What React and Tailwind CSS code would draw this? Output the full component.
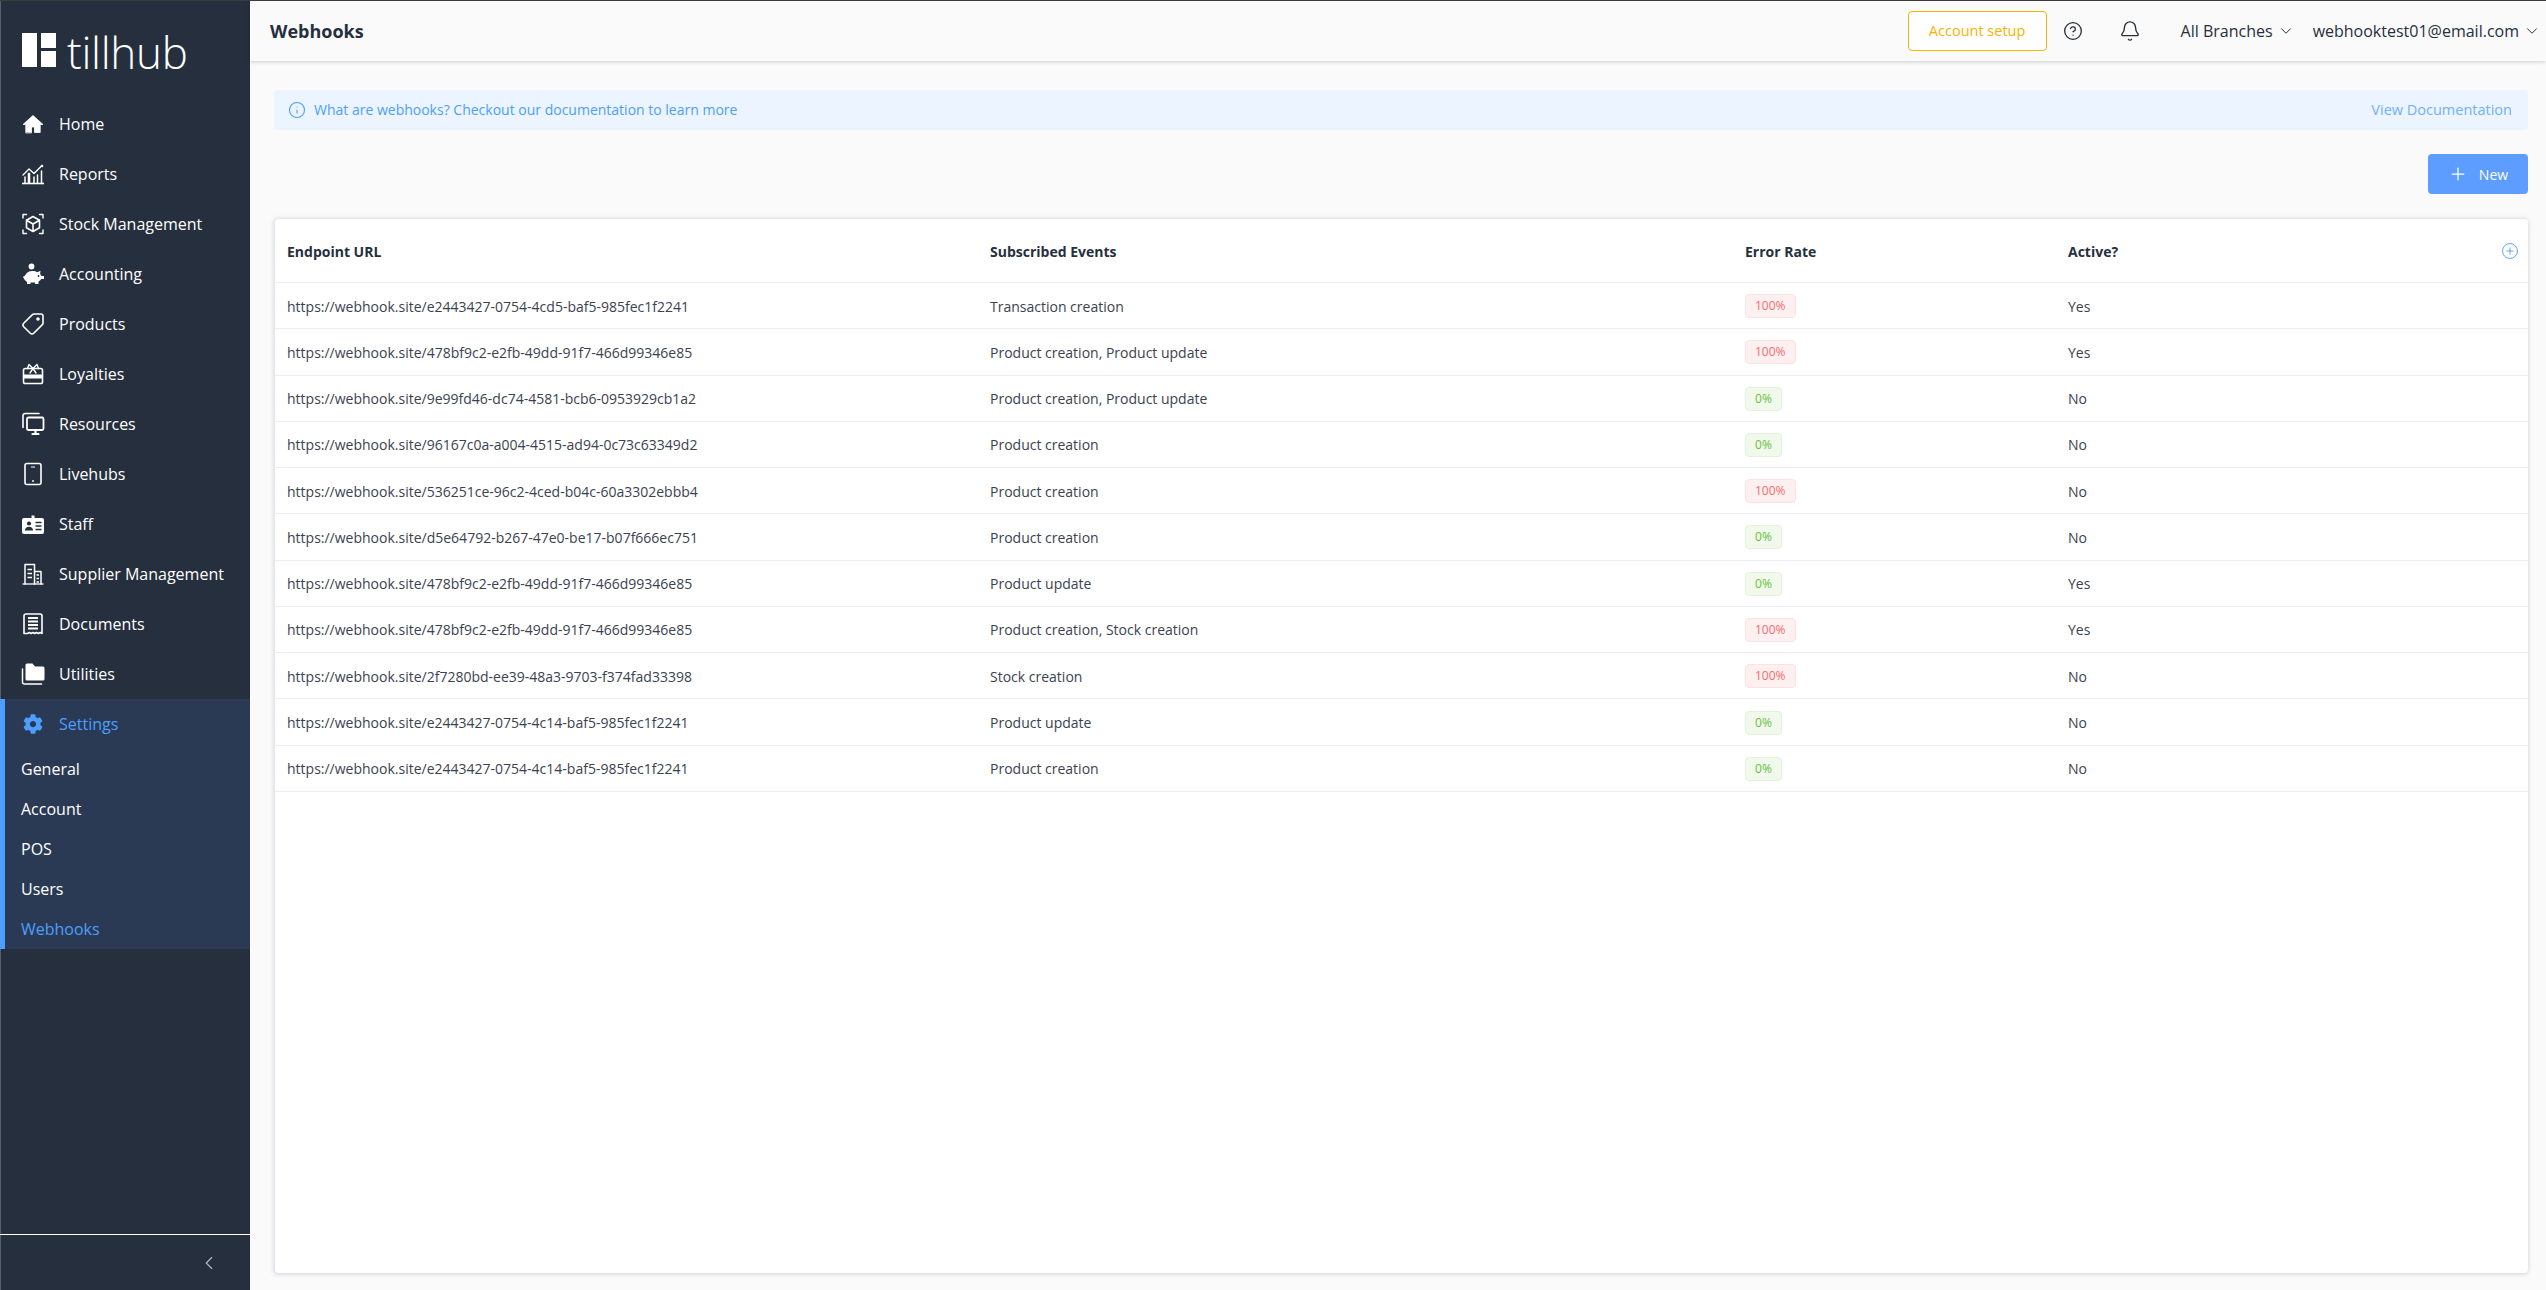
import React from 'react';
import { Bell, ChevronDown, ChevronLeft, CircleHelp, CirclePlus, Info, Plus } from 'lucide-react';
import { FaCog } from 'react-icons/fa';

const SB = '#262f3e';

const Svg = ({ children }) => (
  <svg viewBox="0 0 24 24" className="w-[24px] h-[24px]" fill="none" stroke="white" strokeWidth="1.6" strokeLinecap="round" strokeLinejoin="round">
    {children}
  </svg>
);

const HomeIcon = () => (
  <Svg><path d="M10.5 20.5v-5.5h3v5.500h5.700v-8H22L12 3.500 2 12.500h2.800v8z" fill="white" stroke="white" strokeWidth="0.8" /></Svg>
);
const ReportsIcon = () => (
  <Svg>
    <path d="M1 21.500h22" strokeLinecap="butt" />
    <path d="M2 13l6-6 5 4.500 7-7" strokeWidth="1.400" />
    <circle cx="21" cy="4" r="1.300" fill="white" stroke="none" />
    <path d="M4 21v-6M8.500 21v-9.500h-1V21M13 21v-6M16.500 21v-8M20.500 21V9" strokeWidth="1.500" />
  </Svg>
);
const StockIcon = () => (
  <Svg>
    <path d="M2 6V2.500h3.500M18.500 2.500H22V6M22 18v3.500h-3.500M5.500 21.500H2V18" strokeWidth="1.400" />
    <path d="M12 4.500l6.500 3.700v7.600L12 19.500l-6.500-3.700V8.200zM5.500 8.200L12 12l6.500-3.800M12 12v7.500" strokeWidth="1.600" />
  </Svg>
);
const PiggyIcon = () => (
  <Svg>
    <circle cx="10.500" cy="4.500" r="2.900" fill="white" stroke="none" />
    <path d="M2 14.500c1 0 1.600-.3 2.200-1.200C5.500 10.500 8 9 11.500 9c2 0 3.500.4 4.800 1.200l3.200-1.500-.4 3.200c.6.7 1 1.300 1.300 2.100H23v3h-2.800c-.6 1.100-1.500 2-2.700 2.600V22h-3.400v-1.500H9.500V22H6v-2.100C4.400 19 3.300 17.800 2.800 16.300 2.300 16 2 15.300 2 14.500z" fill="white" stroke="none" />
    <circle cx="17.500" cy="14" r=".9" fill={SB} stroke="none" />
  </Svg>
);
const TagIcon = () => (
  <Svg>
    <g transform="translate(24 0) scale(-1 1)">
      <path d="M12.600 2.600A2 2 0 0 0 11.200 2H4a2 2 0 0 0-2 2v7.200a2 2 0 0 0 .6 1.400l8.700 8.700a2.400 2.400 0 0 0 3.400 0l6.600-6.600a2.400 2.400 0 0 0 0-3.400z" />
      <circle cx="7" cy="7" r="1" fill="white" />
    </g>
  </Svg>
);
const GiftIcon = () => (
  <Svg>
    <rect x="2.500" y="6.500" width="19" height="15" rx="1.800" />
    <path d="M3 12.500h18v4H3z" fill="white" stroke="none" />
    <path d="M12 6.500L8 2.500 6.500 6.500M12 6.500l4-4 1.500 4M12 6.500L9 11M12 6.500l3 4.500" strokeWidth="1.400" />
  </Svg>
);
const ResourcesIcon = () => (
  <Svg>
    <path d="M2 15.500V3.500a2 2 0 0 1 2-2h14" />
    <rect x="6" y="5.500" width="16.500" height="12.500" rx="1.500" strokeWidth="1.800" />
    <path d="M11.500 22h6M14.500 18v4" strokeWidth="2.200" />
  </Svg>
);
const LivehubIcon = () => (
  <Svg>
    <rect x="4" y="1.500" width="16" height="21" rx="2" />
    <path d="M10.500 5h3" strokeWidth="1.200" />
    <circle cx="12" cy="19" r=".9" fill="white" stroke="none" />
  </Svg>
);
const StaffIcon = () => (
  <Svg>
    <path d="M3 6h7.500V3.500h3V6H21a2 2 0 0 1 2 2v12a2 2 0 0 1-2 2H3a2 2 0 0 1-2-2V8a2 2 0 0 1 2-2z" fill="white" stroke="none" />
    <circle cx="8" cy="11.500" r="2.100" fill={SB} stroke="none" />
    <path d="M3.800 18.500c.3-2.500 1.800-3.800 4.200-3.800s3.900 1.300 4.200 3.800z" fill={SB} stroke="none" />
    <path d="M14.500 10.500h6M14.500 14h6M14.500 17.500h6" stroke={SB} strokeWidth="1.600" strokeLinecap="butt" />
  </Svg>
);
const SupplierIcon = () => (
  <Svg>
    <path d="M1.500 22h21" strokeLinecap="butt" strokeWidth="1.300" />
    <path d="M4 22V2.500h9.500V22M13.500 9.500H20V22" strokeWidth="1.500" />
    <path d="M6.500 7.500h4.500M6.500 11.500h4.500M6.500 15.500h4.500M15.500 13h2.500M15.500 16.500h2.500M15.500 20h2.500" strokeWidth="1.700" strokeLinecap="butt" />
  </Svg>
);
const DocumentIcon = () => (
  <Svg>
    <path d="M3 21.500V4a2 2 0 0 1 2-2h14a2 2 0 0 1 2 2v17.500l-1.800-1-1.800 1-1.800-1-1.800 1-1.800-1-1.800 1-1.800-1-1.800 1z" strokeWidth="1.600" />
    <path d="M7 6h10M7 9.500h10M7 13h10M7 16.500h10" strokeWidth="2" strokeLinecap="butt" />
  </Svg>
);
const FolderIcon = () => (
  <Svg>
    <path d="M1.500 7v13a2 2 0 0 0 2 2h17" strokeWidth="1.500" />
    <path d="M6 1.500h5.500l2.500 3h8a1.500 1.500 0 0 1 1.500 1.500v11a1.500 1.500 0 0 1-1.500 1.500H6A1.500 1.500 0 0 1 4.500 17V3A1.500 1.500 0 0 1 6 1.500z" fill="white" stroke="none" />
  </Svg>
);

const NAV = [
  ['Home', HomeIcon],
  ['Reports', ReportsIcon],
  ['Stock Management', StockIcon],
  ['Accounting', PiggyIcon],
  ['Products', TagIcon],
  ['Loyalties', GiftIcon],
  ['Resources', ResourcesIcon],
  ['Livehubs', LivehubIcon],
  ['Staff', StaffIcon],
  ['Supplier Management', SupplierIcon],
  ['Documents', DocumentIcon],
  ['Utilities', FolderIcon],
];

const SUB = ['General', 'Account', 'POS', 'Users', 'Webhooks'];

const ROWS = [
  ['e2443427-0754-4cd5-baf5-985fec1f2241', 'Transaction creation', 100, 'Yes'],
  ['478bf9c2-e2fb-49dd-91f7-466d99346e85', 'Product creation, Product update', 100, 'Yes'],
  ['9e99fd46-dc74-4581-bcb6-0953929cb1a2', 'Product creation, Product update', 0, 'No'],
  ['96167c0a-a004-4515-ad94-0c73c63349d2', 'Product creation', 0, 'No'],
  ['536251ce-96c2-4ced-b04c-60a3302ebbb4', 'Product creation', 100, 'No'],
  ['d5e64792-b267-47e0-be17-b07f666ec751', 'Product creation', 0, 'No'],
  ['478bf9c2-e2fb-49dd-91f7-466d99346e85', 'Product update', 0, 'Yes'],
  ['478bf9c2-e2fb-49dd-91f7-466d99346e85', 'Product creation, Stock creation', 100, 'Yes'],
  ['2f7280bd-ee39-48a3-9703-f374fad33398', 'Stock creation', 100, 'No'],
  ['e2443427-0754-4c14-baf5-985fec1f2241', 'Product update', 0, 'No'],
  ['e2443427-0754-4c14-baf5-985fec1f2241', 'Product creation', 0, 'No'],
];

const Sidebar = () => (
  <aside className="w-[250px] shrink-0 bg-[#262f3e] border-l border-[#5a5f68] flex flex-col text-white">
    <div className="h-[98px] pl-[21px] pt-[32px] flex items-start">
      <div className="flex gap-[4px] w-[34px] h-[34px]">
        <div className="w-[15px] h-full bg-white" />
        <div className="w-[15px] flex flex-col gap-[3px]">
          <div className="h-[15px] bg-white" />
          <div className="h-[16px] bg-white" />
        </div>
      </div>
      <span className="ml-[11px] -mt-[9px] text-[44px] leading-[56px] font-light tracking-[-0.3px]">tillhub</span>
    </div>
    {NAV.map(([label, Icon]) => (
      <div key={label} className="h-[50px] flex items-center pl-[20px] text-[16px]">
        <span className="w-[24px] h-[24px] flex items-center justify-center"><Icon /></span>
        <span className="ml-[14px]">{label}</span>
      </div>
    ))}
    <div className="bg-[#2a3a55] -ml-px border-l-[5px] border-[#4d9eff]">
      <div className="h-[50px] flex items-center pl-[16px] text-[16px] text-[#4d9eff]">
        <span className="w-[24px] h-[24px] flex items-center justify-center"><FaCog size={20} /></span>
        <span className="ml-[14px]">Settings</span>
      </div>
      {SUB.map((s) => (
        <div key={s} className={`h-[40px] flex items-center pl-[16px] text-[16px] ${s === 'Webhooks' ? 'text-[#4d9eff]' : 'text-white'}`}>
          {s}
        </div>
      ))}
    </div>
    <div className="mt-auto h-[56px] border-t border-white flex items-center justify-end pr-[30px] -ml-px">
      <ChevronLeft size={22} strokeWidth={1.2} color="#b4b8be" />
    </div>
  </aside>
);

const Header = () => (
  <header className="h-[60px] shrink-0 bg-[#fafafa] shadow-[0_1px_4px_rgba(0,0,0,0.18)] flex items-center pl-[20px] text-[#262f3e] relative">
    <h1 className="text-[18px] font-bold">Webhooks</h1>
    <div className="ml-auto flex items-center">
      <button className="w-[139px] h-[40px] bg-white border border-[#f5b400] rounded-[4px] text-[14.5px] font-medium text-[#f5b400]">
        Account setup
      </button>
      <CircleHelp size={20} strokeWidth={1.6} className="ml-[16px]" />
      <Bell size={22} strokeWidth={1.5} className="ml-[36px]" />
      <span className="ml-[40px] text-[16px]">All Branches</span>
      <ChevronDown size={18} strokeWidth={1.3} className="ml-[4px]" />
      <span className="ml-[18px] text-[16px]">webhooktest01@email.com</span>
      <ChevronDown size={18} strokeWidth={1.3} className="ml-[4px] mr-[5px]" />
    </div>
  </header>
);

const Badge = ({ value }) => (
  <span
    className={`inline-flex items-center h-[24px] px-[9px] border rounded-[4px] text-[12px] ${
      value > 0
        ? 'bg-[#fef0f0] border-[#fde2e2] text-[#f56c6c]'
        : 'bg-[#f0f9eb] border-[#e1f3d8] text-[#67c23a]'
    }`}
  >
    {value}%
  </span>
);

const WebhookTable = () => (
  <div className="flex-1 mb-[17px] bg-white border-t border-l border-[#e4e7ed] rounded-[4px] shadow-[0_1px_4px_rgba(80,80,120,0.25)] text-[14px] text-[#3a4250]">
    <div className="grid grid-cols-[703px_755px_323px_1fr] h-[64px] pt-px items-center font-bold text-[#262f3e] border-b border-[#ebeef5] [&>div]:pl-[12px]">
      <div>Endpoint URL</div>
      <div>Subscribed Events</div>
      <div>Error Rate</div>
      <div className="flex items-center justify-between pr-[9px]">
        <span>Active?</span>
        <CirclePlus size={18} strokeWidth={1.2} color="#4d9eff" />
      </div>
    </div>
    {ROWS.map(([id, events, rate, active], i) => (
      <div key={i} className="grid grid-cols-[703px_755px_323px_1fr] h-[46.27px] pt-px items-center border-b border-[#ebeef5] [&>div]:pl-[12px]">
        <div>https://webhook.site/{id}</div>
        <div>{events}</div>
        <div><Badge value={rate} /></div>
        <div>{active}</div>
      </div>
    ))}
  </div>
);

const App = () => (
  <div className="h-screen w-full overflow-hidden flex border-t border-[#3c3c3c] font-['Open_Sans',sans-serif] bg-[#fafafa]">
    <Sidebar />
    <main className="flex-1 min-w-0 flex flex-col">
      <Header />
      <div className="flex-1 min-h-0 flex flex-col pt-[29px] pl-[24px] pr-[18px]">
        <div className="h-[40px] shrink-0 bg-[#ecf5ff] rounded-[4px] flex items-center justify-between pl-[14px] pr-[16px] text-[14px] text-[#4d9eff]">
          <div className="flex items-center gap-[8px]">
            <Info size={18} strokeWidth={1.5} />
            <span className="-mt-px">What are webhooks? Checkout our documentation to learn more</span>
          </div>
          <span className="-mt-px text-[14.5px] text-[#6fb0ff]">View Documentation</span>
        </div>
        <div className="mt-[24px] mb-[24px] flex justify-end">
          <button className="w-[100px] h-[40px] bg-[#5c9dff] rounded-[4px] text-white text-[14px] flex items-center justify-center gap-[11px]">
            <Plus size={20} strokeWidth={1.5} />
            New
          </button>
        </div>
        <WebhookTable />
      </div>
    </main>
  </div>
);

export default App;
